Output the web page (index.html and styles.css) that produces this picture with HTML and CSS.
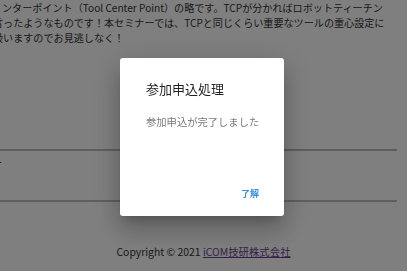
FILE: index.html
```html
<!DOCTYPE html>
<html lang="ja">
<head>
    <meta charset="UTF-8">
    <meta name="viewport" content="width=device-width, initial-scale=1.0">
    <title>セミナー参加申込</title>
    <link rel="stylesheet" href="styles.css">
</head>
<body>
    <div class="page">
        <p class="intro">
            ンターポイント（Tool Center Point）の略です。TCPが分かればロボットティーチン<br>
            言ったようなものです！本セミナーでは、TCPと同じくらい重要なツールの重心設定に<br>
            扱いますのでお見逃しなく！
        </p>

        <div class="info-table">
            <div class="info-row">
                <span class="info-label">ー</span>
            </div>
        </div>

        <footer class="footer">
            Copyright © 2021 <a href="#" class="footer-link">iCOM技研株式会社</a>
        </footer>
    </div>

    <!-- dialog shown after submitting -->
    <div class="overlay">
        <div class="dialog">
            <div class="dialog-title">参加申込処理</div>
            <div class="dialog-text">参加申込が完了しました</div>
            <div class="dialog-actions">
                <button class="dialog-button">了解</button>
            </div>
        </div>
    </div>
</body>
</html>
```

FILE: styles.css
```css
body {
    margin: 0;
    font-family: "Noto Sans CJK JP", "Noto Sans", sans-serif;
    background-color: #fff;
    color: #333;
    overflow: hidden;
}
.intro {
    margin: 0 0 0 -7px;
    font-size: 10.1px;
    line-height: 15px;
    text-indent: 9px;
    white-space: nowrap;
}
.info-table {
    margin: 104px 10px 0 0;
    border-top: 2px solid #bdbdbd;
    border-bottom: 2px solid #bdbdbd;
}
.info-row {
    height: 49px;
    font-size: 10px;
    line-height: 15px;
    padding-top: 4px;
    box-sizing: border-box;
}
.info-label {
    display: inline-block;
    margin-left: -8px;
}
.footer {
    padding-top: 42px;
    text-align: center;
    font-size: 10.4px;
    line-height: 16px;
}
.footer-link {
    color: #6b3f99;
}
.overlay {
    position: fixed;
    inset: 0;
    background-color: rgba(0, 0, 0, 0.5);
    display: flex;
    align-items: center;
    justify-content: center;
}
.dialog {
    width: 164px;
    height: 158px;
    margin: 3px 3px 0 0;
    background-color: #fff;
    border-radius: 3px;
    display: flex;
    flex-direction: column;
    box-shadow: 0 8px 10px -5px rgba(0, 0, 0, 0.2), 0 16px 24px 2px rgba(0, 0, 0, 0.14), 0 6px 30px 5px rgba(0, 0, 0, 0.12);
}
.dialog-title {
    padding: 21px 26px 0;
    font-size: 13px;
    line-height: 20px;
    color: rgba(0, 0, 0, 0.87);
}
.dialog-text {
    padding: 15px 20px 0 26px;
    font-size: 10.3px;
    line-height: 15px;
    white-space: nowrap;
    color: rgba(0, 0, 0, 0.55);
}
.dialog-actions {
    margin-top: auto;
    display: flex;
    justify-content: flex-end;
    padding: 0 17px 12px;
}
.dialog-button {
    border: none;
    background: none;
    padding: 0 8px;
    height: 22px;
    font-family: inherit;
    font-size: 9px;
    font-weight: bold;
    color: #3a8fd9;
    cursor: pointer;
}
```
